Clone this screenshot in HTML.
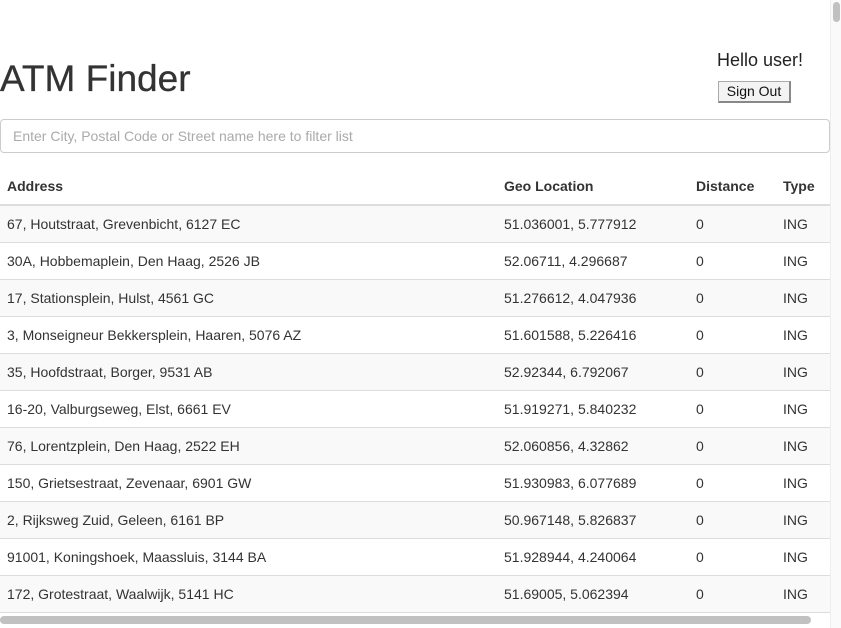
<!DOCTYPE html>
<html><head><style>
body{margin:0;width:841px;height:628px;overflow:hidden;background:#fff;font-family:"Liberation Sans",sans-serif;color:#333;position:relative}
h1{position:absolute;left:0;top:56px;margin:0;font-size:37px;font-weight:normal;line-height:46px;color:#333;-webkit-text-stroke:0.3px #333}
.hello{position:absolute;left:717px;top:50px;font-size:18px;color:#222}
.btn{position:absolute;left:718px;top:81px;width:73px;height:22px;box-sizing:border-box;border:1px solid #aaa;border-right:2px solid #888;border-bottom:2px solid #888;background:#f3f3f3;font-size:14px;text-align:center;line-height:19px;color:#111}
.inp{position:absolute;left:0;top:119px;width:830px;height:34px;box-sizing:border-box;border:1px solid #ccc;border-radius:4px;font-size:14px;color:#aaa;padding-left:12px;line-height:32px}
table{position:absolute;left:0;top:168px;width:830px;border-collapse:collapse;font-size:14px}
th{text-align:left;font-weight:bold;height:36px;border-bottom:2px solid #ddd;padding:0 0 0 7px;vertical-align:middle}
td{height:36px;border-top:1px solid #ddd;padding:0 0 0 7px;vertical-align:middle}
tbody tr:last-child td{border-bottom:1px solid #ddd}
tbody tr:nth-child(odd){background:#f9f9f9}
.vs{position:absolute;left:830px;top:0;width:11px;height:628px;background:#fafafa;border-left:1px solid #eee}
.vt{position:absolute;left:833px;top:2px;width:7px;height:20px;background:#c1c1c1;border-radius:4px}
.hs{position:absolute;left:0;top:616px;width:811px;height:8px;background:#c1c1c1;border-radius:4px}
</style></head><body>
<h1>ATM Finder</h1>
<div class="hello">Hello user!</div>
<div class="btn">Sign Out</div>
<div class="inp">Enter City, Postal Code or Street name here to filter list</div>
<table>
<colgroup><col style="width:497px"><col style="width:192px"><col style="width:87px"><col></colgroup>
<thead><tr><th>Address</th><th>Geo Location</th><th>Distance</th><th>Type</th></tr></thead>
<tbody>
<tr><td>67, Houtstraat, Grevenbicht, 6127 EC</td><td>51.036001, 5.777912</td><td>0</td><td>ING</td></tr>
<tr><td>30A, Hobbemaplein, Den Haag, 2526 JB</td><td>52.06711, 4.296687</td><td>0</td><td>ING</td></tr>
<tr><td>17, Stationsplein, Hulst, 4561 GC</td><td>51.276612, 4.047936</td><td>0</td><td>ING</td></tr>
<tr><td>3, Monseigneur Bekkersplein, Haaren, 5076 AZ</td><td>51.601588, 5.226416</td><td>0</td><td>ING</td></tr>
<tr><td>35, Hoofdstraat, Borger, 9531 AB</td><td>52.92344, 6.792067</td><td>0</td><td>ING</td></tr>
<tr><td>16-20, Valburgseweg, Elst, 6661 EV</td><td>51.919271, 5.840232</td><td>0</td><td>ING</td></tr>
<tr><td>76, Lorentzplein, Den Haag, 2522 EH</td><td>52.060856, 4.32862</td><td>0</td><td>ING</td></tr>
<tr><td>150, Grietsestraat, Zevenaar, 6901 GW</td><td>51.930983, 6.077689</td><td>0</td><td>ING</td></tr>
<tr><td>2, Rijksweg Zuid, Geleen, 6161 BP</td><td>50.967148, 5.826837</td><td>0</td><td>ING</td></tr>
<tr><td>91001, Koningshoek, Maassluis, 3144 BA</td><td>51.928944, 4.240064</td><td>0</td><td>ING</td></tr>
<tr><td>172, Grotestraat, Waalwijk, 5141 HC</td><td>51.69005, 5.062394</td><td>0</td><td>ING</td></tr>
</tbody></table>
<div class="vs"></div><div class="vt"></div>
<div class="hs"></div>
</body></html>
